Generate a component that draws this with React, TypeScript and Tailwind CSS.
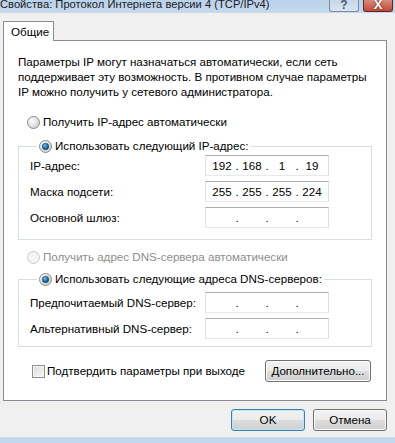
import React from "react"

function Radio({ checked = false, disabled = false }: { checked?: boolean; disabled?: boolean }) {
  return (
    <svg width="13" height="13" viewBox="0 0 13 13" className="shrink-0">
      <defs>
        <radialGradient id="rbg" cx="0.35" cy="0.35" r="0.8">
          <stop offset="0" stopColor="#ffffff" />
          <stop offset="1" stopColor="#c9c9c9" />
        </radialGradient>
        <radialGradient id="rdot" cx="0.4" cy="0.35" r="0.7">
          <stop offset="0" stopColor="#6fc3ef" />
          <stop offset="0.6" stopColor="#1e6ca1" />
          <stop offset="1" stopColor="#0c3e63" />
        </radialGradient>
      </defs>
      <circle cx="6.5" cy="6.5" r="6" fill={disabled ? "#f4f4f4" : "url(#rbg)"} stroke={disabled ? "#c9c9c9" : "#8b8b8b"} />
      {checked && <circle cx="6.5" cy="6.5" r="3.3" fill="url(#rdot)" stroke="#1c4f73" strokeWidth="0.6" />}
    </svg>
  )
}

function IpBox({ parts }: { parts?: string[] }) {
  const p = parts ?? ["", "", "", ""]
  return (
    <div className="ml-auto mr-[42px] flex h-[21px] w-[124px] items-center border border-[#abadb3] border-b-[#e3e9ef] border-l-[#e2e3ea] border-r-[#dbdfe6] bg-white pl-[3px]">
      <span className="w-[26px] text-center">{p[0]}</span>
      <span className="w-[4px] text-center">.</span>
      <span className="w-[26px] text-center">{p[1]}</span>
      <span className="w-[4px] text-center">.</span>
      <span className="w-[26px] text-center">{p[2]}</span>
      <span className="w-[4px] text-center">.</span>
      <span className="w-[26px] text-center">{p[3]}</span>
    </div>
  )
}

function Row({ label, parts }: { label: string; parts?: string[] }) {
  return (
    <div className="flex h-[21px] items-center">
      <span>{label}</span>
      <IpBox parts={parts} />
    </div>
  )
}

function Button({ children, primary = false, className = "" }: { children: React.ReactNode; primary?: boolean; className?: string }) {
  return (
    <button
      type="button"
      className={
        "flex items-center justify-center rounded-[3px] border bg-[linear-gradient(#f2f2f2_0%,#ebebeb_50%,#dddddd_50%,#cfcfcf_100%)] text-[11.6px] text-black " +
        (primary
          ? "border-[#3c7fb1] shadow-[inset_0_0_0_1px_#bde8fb]"
          : "border-[#707070] shadow-[inset_0_0_0_1px_#fcfcfc]") +
        " " +
        className
      }
    >
      {children}
    </button>
  )
}

export default function App() {
  return (
    <div className="relative flex h-[443px] w-[395px] flex-col overflow-hidden bg-[#f0f0f0] font-['Liberation_Sans',Arial,sans-serif] text-[11.6px] text-black">
      {/* заголовок окна, обрезан сверху */}
      <div className="flex h-[13px] shrink-0 items-start overflow-hidden bg-[linear-gradient(#b9d1ea,#c6d9ee)]">
        <div className="-mt-[3px] whitespace-nowrap text-[11.2px] leading-[15px] text-[#1b1b1b]">
          Свойства: Протокол Интернета версии 4 (TCP/IPv4)
        </div>
        <div className="ml-auto flex">
          <div className="flex h-[12px] w-[30px] items-end justify-center overflow-hidden rounded-b-[3px] border border-t-0 border-[#7b8da8] bg-[linear-gradient(#c8d6e8,#dbe5f1)] text-[12px] font-bold leading-[12px] text-[#4a5b76]">
            ?
          </div>
          <div className="ml-[4px] mr-[2px] flex h-[12px] w-[30px] items-end justify-center overflow-hidden rounded-b-[3px] border border-t-0 border-[#5e2626] bg-[linear-gradient(#d98b7c,#c24a35)] text-[13px] font-bold leading-[12px] text-white [text-shadow:0_0_2px_#3a0f0a]">
            X
          </div>
        </div>
      </div>

      <div className="flex flex-1 flex-col px-[3px] pt-[8px]">
        <div className="relative z-10 flex h-[20px] w-[51px] items-center border border-b-0 border-[#898c95] bg-white pl-[7px]">
          Общие
        </div>
        <div className="-mt-px flex h-[361px] w-[384px] flex-col border border-[#898c95] bg-white px-[14px] pt-[13px]">
          <p className="whitespace-nowrap leading-[15px]">
            Параметры IP могут назначаться автоматически, если сеть
            <br />
            поддерживает эту возможность. В противном случае параметры
            <br />
            IP можно получить у сетевого администратора.
          </p>

          <div className="mt-[15px] flex h-[16px] items-center gap-[3px] pl-[9px]">
            <Radio />
            <span>Получить IP-адрес автоматически</span>
          </div>

          <fieldset className="mt-[8px] h-[102px] border border-[#d5dfe5] pl-[11px] pt-[1px]">
            <legend className="ml-[7px] flex h-[16px] items-center gap-[3px] px-[2px]">
              <Radio checked />
              <span>Использовать следующий IP-адрес:</span>
            </legend>
            <div className="flex flex-col gap-[5px]">
              <Row label="IP-адрес:" parts={["192", "168", "1", "19"]} />
              <Row label="Маска подсети:" parts={["255", "255", "255", "224"]} />
              <Row label="Основной шлюз:" />
            </div>
          </fieldset>

          <div className="mt-[9px] flex h-[16px] items-center gap-[3px] pl-[9px] text-[#8d8d8d]">
            <Radio disabled />
            <span>Получить адрес DNS-сервера автоматически</span>
          </div>

          <fieldset className="mt-[6px] h-[76px] border border-[#d5dfe5] pl-[11px] pt-[5px]">
            <legend className="ml-[7px] flex h-[16px] items-center gap-[3px] px-[2px]">
              <Radio checked />
              <span>Использовать следующие адреса DNS-серверов:</span>
            </legend>
            <div className="flex flex-col gap-[5px]">
              <Row label="Предпочитаемый DNS-сервер:" />
              <Row label="Альтернативный DNS-сервер:" />
            </div>
          </fieldset>

          <div className="mt-[13px] flex h-[22px] items-center pl-[14px]">
            <span className="h-[13px] w-[13px] shrink-0 border border-[#8f8f8f] bg-[linear-gradient(135deg,#dcdcdc,#f6f6f6)] shadow-[inset_0_0_0_1px_#f4f4f4]" />
            <span className="ml-[2px]">Подтвердить параметры при выходе</span>
            <Button className="ml-auto mr-[1px] h-[22px] w-[106px]">Дополнительно...</Button>
          </div>
        </div>

        <div className="mt-[8px] flex justify-end gap-[8px] pr-[5px]">
          <Button primary className="h-[22px] w-[74px]">OK</Button>
          <Button className="h-[22px] w-[74px]">Отмена</Button>
        </div>
      </div>

      <div className="h-[6px] shrink-0 bg-[#c3d7ee]" />
    </div>
  )
}
